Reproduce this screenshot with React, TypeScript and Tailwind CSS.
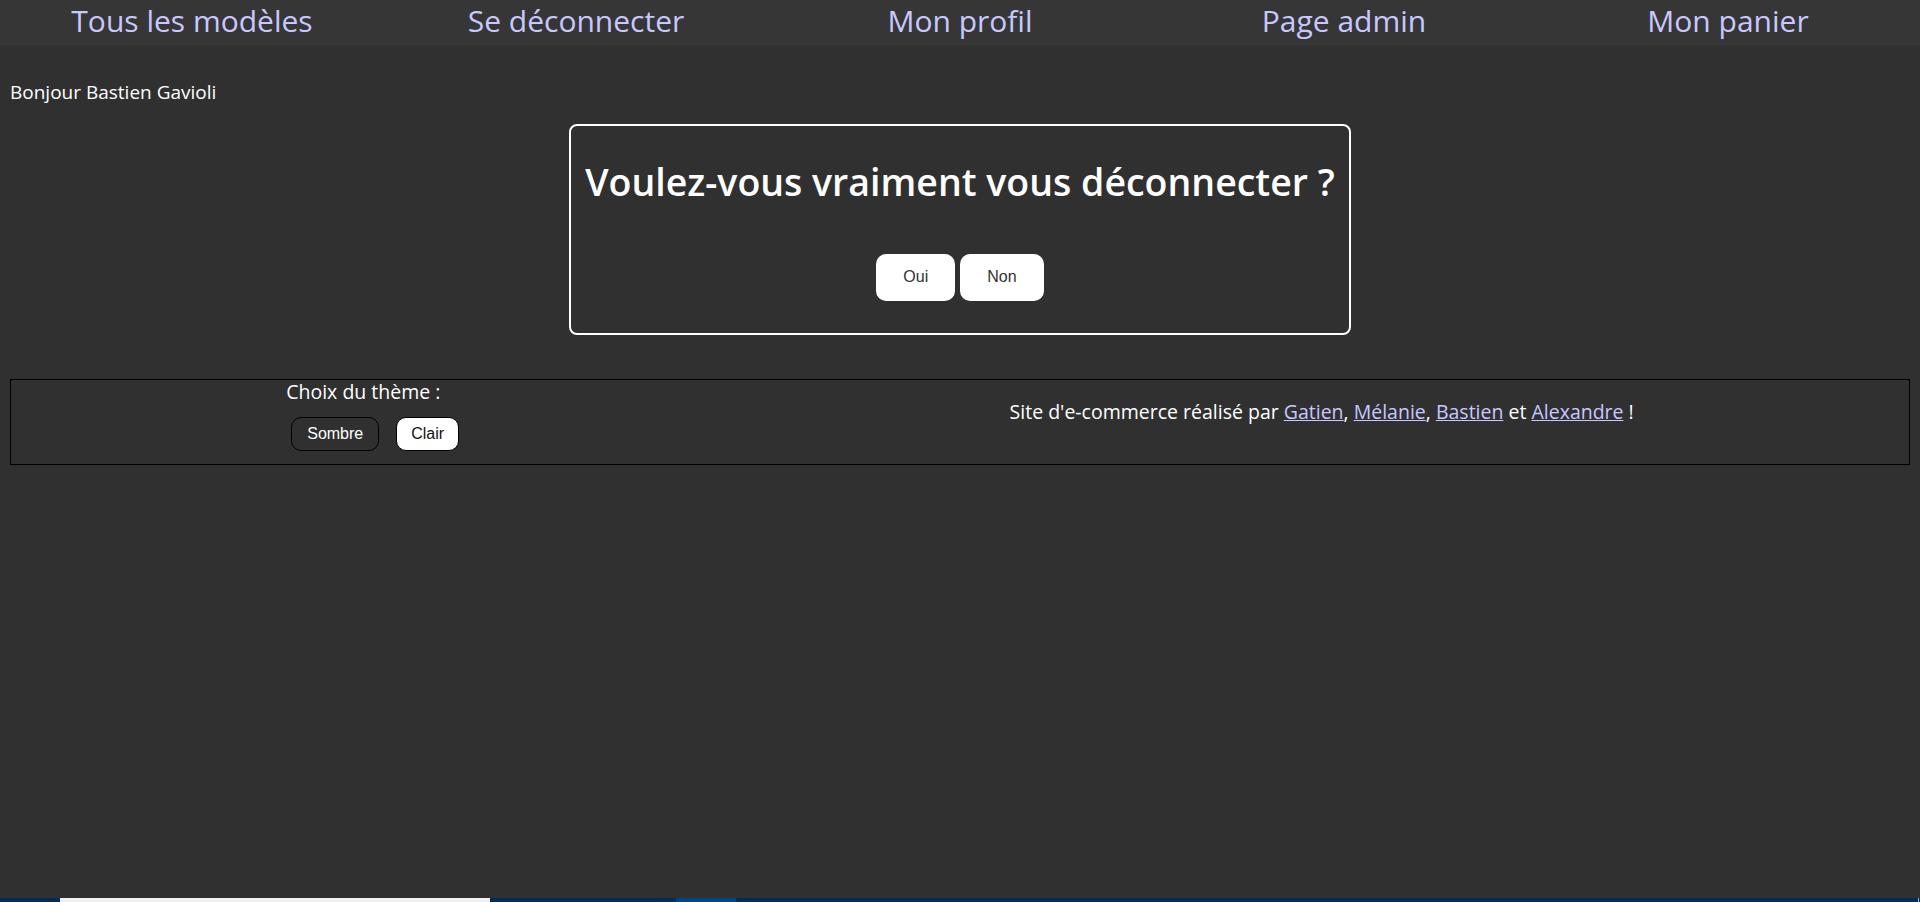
import React from "react";

const sans = "font-['Open_Sans',sans-serif]";
const arial = "font-['Liberation_Sans',Arial,sans-serif]";

export default function App() {
  const navItems = ["Tous les modèles", "Se déconnecter", "Mon profil", "Page admin", "Mon panier"];
  return (
    <div className={`h-screen flex flex-col bg-[#303030] text-white ${sans}`}>
      <div className="flex-1 flex flex-col">
        <nav className="grid grid-cols-5 h-[45px] bg-[#363636]">
          {navItems.map((t) => (
            <a key={t} href="#" className="flex items-center justify-center pb-1 text-[30px] leading-none text-[#c8c8ff]">
              {t}
            </a>
          ))}
        </nav>

        <p className="mt-[33px] ml-[10px] text-[19px]">Bonjour Bastien Gavioli</p>

        <div className="mx-auto mt-[17px] w-[782px] h-[211px] border-2 border-white rounded-[8px] flex flex-col items-center">
          <h1 className="mt-[31px] text-[37.5px] font-semibold leading-[50px] whitespace-nowrap">
            Voulez-vous vraiment vous déconnecter ?
          </h1>
          <div className={`mt-[47px] flex gap-[5px] ${arial}`}>
            <button className="h-[47px] px-[27px] bg-white text-[#333] text-[16px] rounded-[10px]">Oui</button>
            <button className="h-[47px] px-[27px] bg-white text-[#333] text-[16px] rounded-[10px]">Non</button>
          </div>
        </div>

        <footer className="mx-[10px] mt-[44px] h-[86px] border border-black flex justify-around items-start">
          <div className="flex flex-col">
            <p className="text-[19.5px] leading-[24px]">Choix du thème :</p>
            <div className={`mt-[13px] ml-[5px] flex gap-[17px] ${arial}`}>
              <button className="h-[34px] px-[15px] border border-black rounded-[10px] text-white text-[16px] bg-[#303030]">
                Sombre
              </button>
              <button className="h-[34px] px-[14px] border border-black rounded-[10px] text-[#111] text-[16px] bg-white">
                Clair
              </button>
            </div>
          </div>
          <p className="mt-[19px] text-[19.5px] leading-[26px]">
            Site d'e-commerce réalisé par{" "}
            <a href="#" className="underline text-[#c8c8ff]">Gatien</a>,{" "}
            <a href="#" className="underline text-[#c8c8ff]">Mélanie</a>,{" "}
            <a href="#" className="underline text-[#c8c8ff]">Bastien</a> et{" "}
            <a href="#" className="underline text-[#c8c8ff]">Alexandre</a> !
          </p>
        </footer>
      </div>

      <div className="h-[4px] flex bg-[#002d55]">
        <div className="w-[60px]" />
        <div className="w-[430px] bg-[#eef0f2]" />
        <div className="w-[186px]" />
        <div className="w-[60px] bg-[#00467f]" />
        <div className="flex-1" />
        <div className="w-[1px] bg-[#8fb4d8]" />
        <div className="w-[1px]" />
      </div>
    </div>
  );
}
